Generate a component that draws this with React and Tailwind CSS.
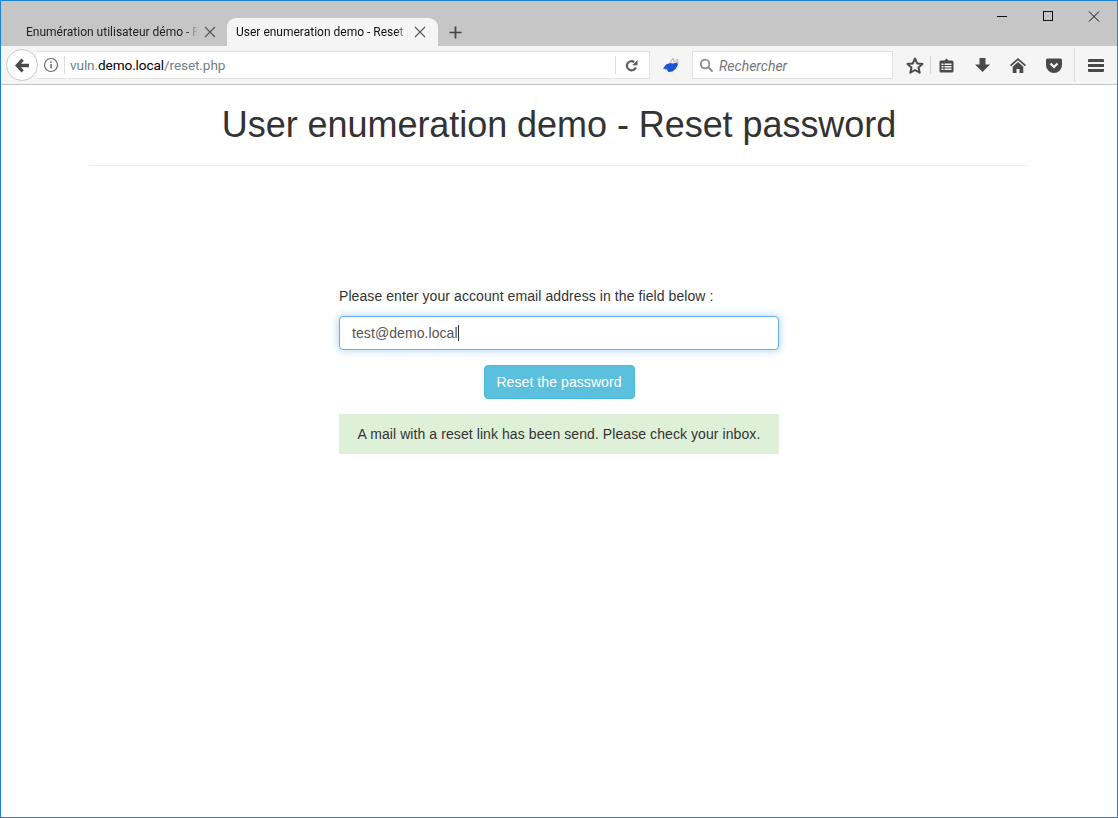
import { useState } from "react";

const uiFont = "font-['Roboto','Noto_Sans',sans-serif]";

const CloseIcon = ({ className = "" }) => (
  <svg width="12" height="12" viewBox="0 0 12 12" className={className}>
    <path d="M1 1l10 10M11 1L1 11" stroke="#555" strokeWidth="1.1" fill="none" />
  </svg>
);

const WindowControls = () => (
  <div className="flex h-[30px] items-center self-start">
    <svg width="46" height="30" viewBox="0 0 46 30">
      <path d="M18 15.500h10" stroke="#111" strokeWidth="1" />
    </svg>
    <svg width="46" height="30" viewBox="0 0 46 30">
      <rect x="18.500" y="10.500" width="9" height="9" fill="none" stroke="#111" strokeWidth="1" />
    </svg>
    <svg width="46" height="30" viewBox="0 0 46 30">
      <path d="M18 10.500l10 10M28 10.500l-10 10" stroke="#111" strokeWidth="1" fill="none" />
    </svg>
  </div>
);

const TabBar = () => (
  <div className="flex h-[45px] shrink-0 bg-[#c6c6c6]">
    <div className="flex flex-1 items-end pl-[25px]">
      <div className="flex h-7 w-[201px] shrink-0 items-center">
        <span
          className={`${uiFont} w-[172px] overflow-hidden whitespace-nowrap text-xs text-[#222] [mask-image:linear-gradient(to_right,black_160px,transparent_172px)]`}
        >
          Enumération utilisateur démo - Reset password
        </span>
        <CloseIcon className="ml-[6px]" />
      </div>
      <div className="flex h-7 w-[211px] shrink-0 items-center rounded-t-[9px] bg-[#f5f5f5] pl-[9px]">
        <span
          className={`${uiFont} w-[172px] overflow-hidden whitespace-nowrap text-xs text-[#111] [mask-image:linear-gradient(to_right,black_160px,transparent_172px)]`}
        >
          User enumeration demo - Reset password
        </span>
        <CloseIcon className="ml-[6px]" />
      </div>
      <div className="flex h-7 items-center pl-[11px]">
        <svg width="13" height="13" viewBox="0 0 13 13">
          <path d="M6.500 0.500v12M0.500 6.500h12" stroke="#444" strokeWidth="1.700" fill="none" />
        </svg>
      </div>
    </div>
    <WindowControls />
  </div>
);

const ToolIcon = ({ children }) => (
  <div className="flex w-9 items-center justify-center">{children}</div>
);

const NavBar = () => (
  <div className="flex h-[39px] shrink-0 items-center border-b border-[#c4c4c4] bg-[#f5f5f5] pl-[5px]">
    <div className="z-10 flex h-8 w-8 shrink-0 items-center justify-center rounded-full border border-[#c9c9c9] bg-white">
      <svg width="16" height="15" viewBox="0 0 16 15">
        <path d="M7.500 0.500L1 7.500l6.500 7 2.300-2.200L7 9.300h8V5.700H7l2.800-3z" fill="#4a4a4a" />
      </svg>
    </div>
    <div className="-ml-px flex h-7 w-[613px] shrink-0 items-center border border-l-0 border-[#e2e2e2] bg-white">
      <svg width="16" height="16" viewBox="0 0 16 16" className="ml-[6px] shrink-0">
        <circle cx="8" cy="8" r="6.500" fill="none" stroke="#6b6b6b" strokeWidth="1.200" />
        <rect x="7.300" y="7" width="1.500" height="4.500" fill="#6b6b6b" />
        <rect x="7.300" y="4.300" width="1.500" height="1.600" fill="#6b6b6b" />
      </svg>
      <div className="ml-[5px] h-[18px] w-px shrink-0 bg-[#dcdcdc]" />
      <span className={`${uiFont} ml-[5px] pt-px text-[13.6px] tracking-[-0.1px] text-[#6f7f8a]`}>
        vuln.<span className="text-black">demo.local</span>/reset.php
      </span>
      <div className="ml-auto h-[18px] w-px bg-[#dcdcdc]" />
      <div className="flex w-[33px] justify-center pr-[3px]">
        <svg width="13" height="13" viewBox="0 0 13 13">
          <path d="M10.800 8.300A4.600 4.600 0 1 1 9.200 3" fill="none" stroke="#5c5c5c" strokeWidth="2.200" />
          <path d="M7.200 6.300h5.300V1z" fill="#5c5c5c" />
        </svg>
      </div>
    </div>
    <div className="flex w-[42px] shrink-0 justify-center">
      <svg width="20" height="16" viewBox="0 0 20 16">
        <path d="M9 6l3-5 1.500 4 3-3 .500 4.500" fill="#ececec" stroke="#a8a8a8" strokeWidth="0.800" />
        <path d="M2 11.500L5 7.500l4-1.500 3 .500 4-1 1 2-2 4-3.500 3-4 .500-1.500-2z" fill="#1a55d2" />
        <path d="M2 11.500l4 .300.500 1.700z" fill="#8fa9de" />
      </svg>
    </div>
    <div className="flex h-7 w-[201px] shrink-0 items-center border border-[#e2e2e2] bg-white pl-[6px]">
      <svg width="15" height="15" viewBox="0 0 15 15">
        <circle cx="6" cy="6" r="4.300" fill="none" stroke="#8a8a8a" strokeWidth="1.700" />
        <path d="M9.300 9.300l4.300 4.300" stroke="#8a8a8a" strokeWidth="2" fill="none" />
      </svg>
      <span className={`${uiFont} ml-[5px] pt-px text-sm italic text-[#777]`}>Rechercher</span>
    </div>
    <div className="flex w-[37px] shrink-0 justify-end pr-[6px]">
      <svg width="18" height="17" viewBox="0 0 18 17">
        <path d="M9 1.500l2.200 4.900 5.300.6-4 3.500 1.200 5.200L9 13l-4.700 2.700 1.200-5.200-4-3.500 5.300-.6z" fill="none" stroke="#4a4a4a" strokeWidth="2" strokeLinejoin="round" />
      </svg>
    </div>
    <div className="h-[18px] w-px shrink-0 bg-[#d4d4d4]" />
    <div className="flex w-[33px] shrink-0 justify-start pl-[8px]">
      <svg width="15" height="15" viewBox="0 0 15 15">
        <path d="M2 2.500h3.500L7.500 0.500l2 2H13a1.500 1.500 0 0 1 1.500 1.500v9A1.500 1.500 0 0 1 13 14.500H2A1.500 1.500 0 0 1 .5 13V4A1.500 1.500 0 0 1 2 2.500z" fill="#4a4a4a" />
        <path d="M2.500 5.500h2v1.500h-2zM5.500 5.500h7v1.500h-7zM2.500 8h2v1.500h-2zM5.500 8h7v1.500h-7zM2.500 10.500h2V12h-2zM5.500 10.500h7V12h-7z" fill="#f5f5f5" />
      </svg>
    </div>
    <ToolIcon>
      <svg width="15" height="14" viewBox="0 0 15 14">
        <path d="M4.500 0h6v6.500H15L7.500 14 0 6.500h4.500z" fill="#4a4a4a" />
      </svg>
    </ToolIcon>
    <ToolIcon>
      <svg width="16" height="15" viewBox="0 0 16 15">
        <path d="M8 0L0 7l1.200 1.200L8 2.300l6.800 5.900L16 7z" fill="#4a4a4a" />
        <path d="M8 4L2.700 8.700V15h3.800v-4h3v4h3.800V8.700z" fill="#4a4a4a" />
      </svg>
    </ToolIcon>
    <ToolIcon>
      <svg width="16" height="15" viewBox="0 0 16 15">
        <path d="M1.500 0.500h13A1.500 1.500 0 0 1 16 2v5A8 8 0 0 1 0 7V2A1.500 1.500 0 0 1 1.500 0.500z" fill="#4a4a4a" />
        <path d="M4.500 5.500L8 9l3.500-3.500" fill="none" stroke="#f5f5f5" strokeWidth="2.200" />
      </svg>
    </ToolIcon>
    <div className="ml-[2px] h-[34px] w-px shrink-0 bg-[#e0e0e0]" />
    <div className="flex w-[41px] shrink-0 justify-center">
      <svg width="16" height="13" viewBox="0 0 16 13">
        <path d="M1 0h14a1 1 0 0 1 1 1v2H0V1a1 1 0 0 1 1-1zM0 5h16v3H0zM0 10h16v2a1 1 0 0 1-1 1H1a1 1 0 0 1-1-1z" fill="#4a4a4a" />
      </svg>
    </div>
  </div>
);

const ResetPage = () => {
  const [email, setEmail] = useState("test@demo.local");

  return (
    <div className="flex-1 bg-white font-['Liberation_Sans',Arial,sans-serif] text-sm tracking-[0.08px] text-[#333]">
      <div className="mx-auto w-[940px]">
        <h1 className="mt-[20px] border-b border-[#eee] pb-[20px] text-center text-4xl leading-[40px] tracking-[-0.05px] text-[#333]">
          User enumeration demo - Reset password
        </h1>
      </div>
      <div className="mx-auto mt-[121px] w-[440px]">
        <p className="h-5 leading-[18px]">Please enter your account email address in the field below :</p>
        <div className="mt-[9px] flex h-[34px] items-center rounded-[4px] border border-[#66afe9] bg-white pl-3 shadow-[0_0_8px_rgba(102,175,233,0.6)]">
          <input
            value={email}
            onChange={(e) => setEmail(e.target.value)}
            className="w-[106px] text-[#555] outline-none"
          />
          <span className="h-[16px] w-px bg-[#333]" />
        </div>
        <div className="mt-[15px] flex justify-center">
          <button className="h-[34px] w-[151px] rounded-[4px] border border-[#46b8da] bg-[#5bc0de] text-white">
            Reset the password
          </button>
        </div>
        <div className="mt-[15px] flex h-10 items-center justify-center bg-[#dff0d8] text-[#333]">
          A mail with a reset link has been send. Please check your inbox.
        </div>
      </div>
    </div>
  );
};

const App = () => {
  return (
    <div className="flex h-[818px] w-[1118px] flex-col overflow-hidden border border-[#1b83d8]">
      <TabBar />
      <NavBar />
      <ResetPage />
    </div>
  );
};

export default App;
